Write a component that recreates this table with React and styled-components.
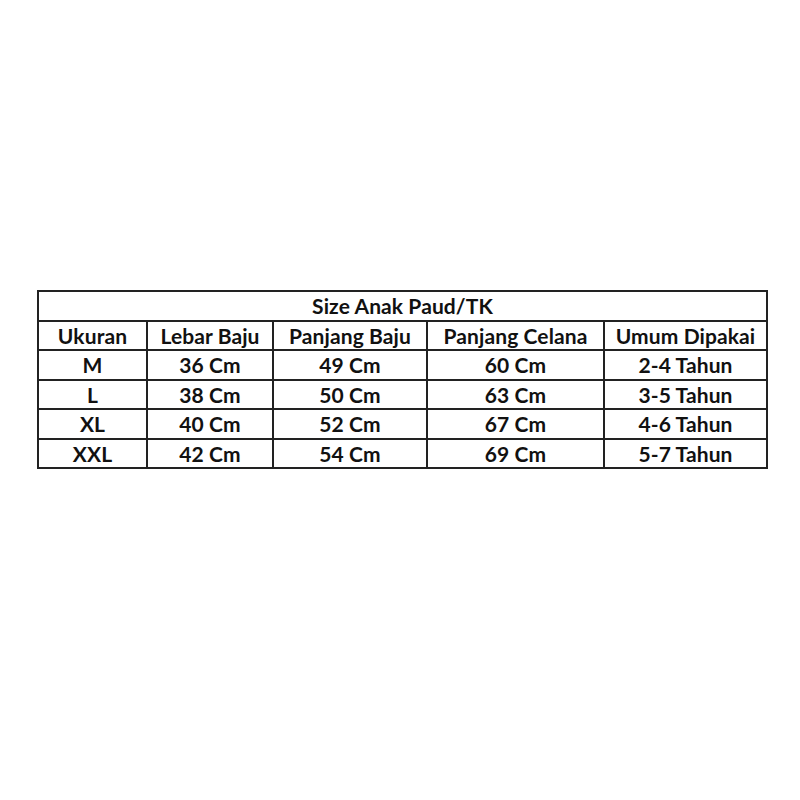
import React from "react";
import styled, { createGlobalStyle } from "styled-components";

const Global = createGlobalStyle`
  html, body { margin: 0; padding: 0; background: #fff; }
  body { font-family: "Lato", "Open Sans", sans-serif; }
`;

const Page = styled.div`
  width: 800px;
  height: 800px;
  box-sizing: border-box;
  padding: 290px 0 0 37px;
`;

const Table = styled.table`
  border-collapse: collapse;
  table-layout: fixed;
  width: 729px;
  font-family: "Lato", "Open Sans", sans-serif;
  font-weight: 700;
  font-size: 21px;
  color: #111;
`;

const Cell = styled.td`
  border: 2px solid #222;
  height: 27.5px;
  padding: 0;
  text-align: center;
  line-height: 27px;
  white-space: nowrap;
  letter-spacing: 0.1px;
`;

const Title = styled(Cell)`
  font-size: 21px;
`;

const widths = [109, 126, 154, 177, 163];
const header = ["Ukuran", "Lebar Baju", "Panjang Baju", "Panjang Celana", "Umum Dipakai"];
const rows = [
  ["M", "36 Cm", "49 Cm", "60 Cm", "2-4 Tahun"],
  ["L", "38 Cm", "50 Cm", "63 Cm", "3-5 Tahun"],
  ["XL", "40 Cm", "52 Cm", "67 Cm", "4-6 Tahun"],
  ["XXL", "42 Cm", "54 Cm", "69 Cm", "5-7 Tahun"],
];

export default function App() {
  return (
    <Page>
      <Global />
      <Table>
        <colgroup>
          {widths.map((w, i) => (
            <col key={i} style={{ width: w }} />
          ))}
        </colgroup>
        <tbody>
          <tr>
            <Title colSpan={5}>Size Anak Paud/TK</Title>
          </tr>
          <tr>
            {header.map((h) => (
              <Cell key={h}>{h}</Cell>
            ))}
          </tr>
          {rows.map((r) => (
            <tr key={r[0]}>
              {r.map((c, i) => (
                <Cell key={i}>{c}</Cell>
              ))}
            </tr>
          ))}
        </tbody>
      </Table>
    </Page>
  );
}
